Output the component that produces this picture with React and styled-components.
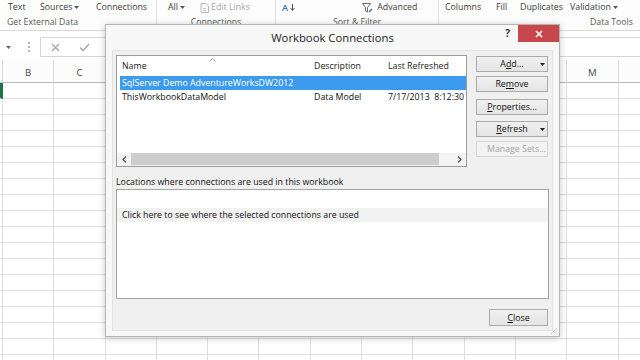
import React from 'react';
import styled, { createGlobalStyle } from 'styled-components';

const Global = createGlobalStyle`
  html, body { margin: 0; padding: 0; background: #fff; }
  body { width: 640px; height: 360px; overflow: hidden; font-family: "Open Sans", "Noto Sans", sans-serif; }
  #root { width: 640px; height: 360px; }
`;

const Screen = styled.div`
  position: relative;
  width: 640px;
  height: 360px;
  overflow: hidden;
  background: #fff;
  color: #222;
`;

/* ---------- Ribbon ---------- */
const Ribbon = styled.div`
  display: flex;
  height: 30px;
  background: #fdfdfd;
  border-bottom: 1px solid #d8d8d8;
`;
const Group = styled.div`
  flex: none;
  width: ${p => p.$w}px;
  display: flex;
  flex-direction: column;
  box-sizing: border-box;
  border-right: ${p => (p.$last ? 'none' : '1px solid #e1e1e1')};
`;
const RibbonRow = styled.div`
  display: flex;
  align-items: center;
  height: 15px;
  padding-left: ${p => p.$pl || 0}px;
  white-space: nowrap;
`;
const Slot = styled.div`
  flex: none;
  width: ${p => (p.$w ? `${p.$w}px` : 'auto')};
  display: flex;
  align-items: center;
  gap: 2px;
  font-size: 8.8px;
  line-height: 15px;
  color: ${p => (p.$disabled ? '#a8a8a8' : '#3c3c3c')};
`;
const GroupLabel = styled.div`
  height: 15px;
  line-height: 15px;
  font-size: 8.7px;
  color: #595959;
  white-space: nowrap;
  text-align: ${p => (p.$left ? 'left' : 'center')};
  padding-left: ${p => p.$pl || 0}px;
`;
const SortA = styled.span`
  color: #2e6fb7;
  font-size: 9px;
  font-weight: 600;
`;

const Caret = ({ color = '#555' }) => (
  <svg width="5" height="3" viewBox="0 0 5 3"><path d="M0 0H5L2.5 3Z" fill={color} /></svg>
);

/* ---------- Formula bar ---------- */
const FormulaBar = styled.div`
  display: flex;
  align-items: flex-start;
  height: 29px;
  box-sizing: border-box;
  padding-top: 6px;
  background: #fff;
`;
const NameBoxArrow = styled.div`
  width: 28px;
  height: 20px;
  display: flex;
  align-items: center;
  padding-left: 6px;
  box-sizing: border-box;
`;
const Grip3 = styled.div`
  width: 12px;
  height: 20px;
  display: flex;
  align-items: center;
`;
const FormulaBox = styled.div`
  flex: 1;
  height: 20px;
  box-sizing: border-box;
  border: 1px solid #d6d6d6;
  border-right: none;
  display: flex;
  align-items: center;
  padding-left: 10px;
  gap: 19px;
`;

/* ---------- Sheet ---------- */
/* letters of columns hidden behind the dialog are left blank */
const COLS = [
  { id: 'B', show: true }, { id: 'C', show: true }, { id: 'D' }, { id: 'E' }, { id: 'F' },
  { id: 'G' }, { id: 'H' }, { id: 'I' }, { id: 'J' }, { id: 'K' }, { id: 'L' },
  { id: 'M', show: true }, { id: 'N', show: true },
];
const SheetRow = styled.div`
  display: grid;
  grid-template-columns: 3px repeat(13, 51.3px);
  height: ${p => p.$h}px;
`;
const HeadCell = styled.div`
  box-sizing: border-box;
  border-right: 1px solid #d9d9d9;
  border-bottom: 1px solid #b9b9b9;
  background: #fcfcfc;
  font-size: 9.6px;
  color: #444;
  display: flex;
  align-items: center;
  justify-content: center;
  padding-top: 2px;
  overflow: hidden;
`;
const Cell = styled.div`
  box-sizing: border-box;
  border-right: ${p => (p.$active ? '3px solid #217346' : '1px solid #dedede')};
  border-bottom: 1px solid #dedede;
`;

/* ---------- Dialog ---------- */
const Dialog = styled.div`
  position: absolute;
  left: 105px;
  top: 24px;
  width: 455px;
  height: 313px;
  box-sizing: border-box;
  background: #f7f7f7;
  border: 1px solid #b4b4b4;
  box-shadow: 0 1px 7px rgba(0, 0, 0, 0.22);
  display: flex;
  flex-direction: column;
`;
const TitleBar = styled.div`
  height: 25px;
  flex: none;
  display: grid;
  grid-template-columns: 1fr auto 1fr;
  align-items: start;
`;
const Title = styled.div`
  font-size: 11.3px;
  line-height: 25px;
  color: #1e1e1e;
`;
const TitleControls = styled.div`
  display: flex;
  justify-content: flex-end;
  align-items: flex-start;
`;
const Help = styled.div`
  font-size: 10px;
  font-weight: 700;
  color: #333;
  line-height: 17px;
  margin-right: 8px;
`;
const CloseX = styled.div`
  width: 41px;
  height: 17px;
  background: #c7474d;
  color: #fff;
  display: flex;
  align-items: center;
  justify-content: center;
`;
const Client = styled.div`
  flex: 1;
  margin: 0 6px 5px 6px;
  background: #f0f0f0;
  border: 1px solid #e2e2e2;
  padding: 4px 4px 4px 3px;
  display: flex;
  flex-direction: column;
  font-size: 8.8px;
  color: #111;
`;
const TopSection = styled.div`
  display: flex;
  gap: 9px;
  height: 112px;
  flex: none;
`;
const ListBox = styled.div`
  width: 351px;
  box-sizing: border-box;
  border: 1px solid #9c9c9c;
  background: #fff;
  display: flex;
  flex-direction: column;
  overflow: hidden;
`;
const ListHeader = styled.div`
  display: flex;
  height: 20px;
  flex: none;
  position: relative;
`;
const ColHead = styled.div`
  flex: none;
  width: ${p => (p.$w ? `${p.$w}px` : 'auto')};
  padding-left: 5px;
  box-sizing: border-box;
  line-height: 20px;
  white-space: nowrap;
  color: #1a1a1a;
  position: relative;
`;
const SortMark = styled.svg`
  position: absolute;
  left: 92px;
  top: 2px;
`;
const ListRow = styled.div`
  display: flex;
  height: 14px;
  flex: none;
  margin-left: 3px;
  background: ${p => (p.$selected ? '#3d9bef' : 'transparent')};
  color: ${p => (p.$selected ? '#fff' : '#111')};
  white-space: pre;
  line-height: 14px;
`;
const ListCell = styled.div`
  flex: none;
  width: ${p => (p.$w ? `${p.$w}px` : 'auto')};
  padding-left: ${p => p.$pl}px;
  box-sizing: border-box;
  overflow: hidden;
`;
const Filler = styled.div`
  flex: 1;
`;
const HScroll = styled.div`
  height: 13px;
  flex: none;
  display: flex;
  background: #f3f3f3;
`;
const ScrollBtn = styled.div`
  width: 14px;
  display: flex;
  align-items: center;
  justify-content: center;
`;
const Thumb = styled.div`
  width: 308px;
  margin: 0 0 1px 0;
  background: #cdcdcd;
`;
const Track = styled.div`
  flex: 1;
`;
const ButtonColumn = styled.div`
  width: 72px;
  display: flex;
  flex-direction: column;
`;
const DlgButton = styled.div`
  width: ${p => p.$w || 72}px;
  height: ${p => p.$h || 16}px;
  margin-top: ${p => p.$mt || 0}px;
  box-sizing: border-box;
  border: 1px solid ${p => (p.$disabled ? '#d6d6d6' : '#ababab')};
  background: ${p => (p.$disabled ? '#f3f3f3' : 'linear-gradient(#f1f1f1, #e4e4e4)')};
  color: ${p => (p.$disabled ? '#a3a3a3' : '#111')};
  display: grid;
  grid-template-columns: 10px 1fr 10px;
  align-items: center;
  font-size: 8.8px;
  line-height: 14px;
  white-space: nowrap;
`;
const BtnText = styled.span`
  text-align: center;
  u { text-underline-offset: 1px; }
`;
const BtnArrow = styled.span`
  display: flex;
  justify-content: center;
`;
const SectionLabel = styled.div`
  margin-top: 8px;
  height: 14px;
  line-height: 14px;
  white-space: nowrap;
  flex: none;
`;
const LocationsBox = styled.div`
  height: 110px;
  flex: none;
  margin-right: -1px;
  box-sizing: border-box;
  border: 1px solid #a4a4a4;
  background: #fff;
  padding-top: 18px;
`;
const LocationRow = styled.div`
  height: 14px;
  line-height: 14px;
  padding-left: 5px;
  background: #f2f2f2;
  white-space: nowrap;
  color: #111;
`;
const Footer = styled.div`
  margin-top: 10px;
  display: flex;
  justify-content: flex-end;
`;
const ResizeGrip = styled.svg`
  position: absolute;
  right: 2px;
  bottom: 2px;
`;

const Chevron = ({ dir }) => (
  <svg width="5" height="7" viewBox="0 0 5 7">
    <path d={dir === 'left' ? 'M4 0.5L1 3.5L4 6.5' : 'M1 0.5L4 3.5L1 6.5'} fill="none" stroke="#555" strokeWidth="1.3" />
  </svg>
);

export default function App() {
  return (
    <Screen>
      <Global />
      <Ribbon>
        <Group $w={157}>
          <RibbonRow $pl={8}>
            <Slot $w={32}>Text</Slot>
            <Slot $w={56}>Sources <Caret /></Slot>
            <Slot>Connections</Slot>
          </RibbonRow>
          <GroupLabel $left $pl={7}>Get External Data</GroupLabel>
        </Group>
        <Group $w={119}>
          <RibbonRow $pl={11}>
            <Slot $w={32}>All <Caret /></Slot>
            <Slot $disabled>
              <svg width="9" height="10" viewBox="0 0 9 10">
                <path d="M1 0.5H6L8.5 3V9.5H1Z" fill="#fafafa" stroke="#b9b9b9" />
                <path d="M3 5.5h3M3 7.5h3" stroke="#c4c4c4" />
              </svg>
              Edit Links
            </Slot>
          </RibbonRow>
          <GroupLabel>Connections</GroupLabel>
        </Group>
        <Group $w={163}>
          <RibbonRow $pl={6}>
            <Slot $w={80}>
              <SortA>A</SortA>
              <svg width="5" height="7" viewBox="0 0 5 7"><path d="M2.5 0V6M0.5 4L2.5 6.5L4.5 4" fill="none" stroke="#555" strokeWidth="1" /></svg>
            </Slot>
            <Slot>
              <svg width="11" height="10" viewBox="0 0 11 10">
                <path d="M0.5 0.5H8.5L5.5 4.5V9L3.5 8V4.5Z" fill="#fff" stroke="#6b6b6b" />
                <path d="M7 9L10 6" stroke="#2e6fb7" strokeWidth="1.4" />
              </svg>
              &nbsp;Advanced
            </Slot>
          </RibbonRow>
          <GroupLabel>Sort &amp; Filter</GroupLabel>
        </Group>
        <Group $w={201} $last>
          <RibbonRow $pl={6}>
            <Slot $w={51}>Columns</Slot>
            <Slot $w={24}>Fill</Slot>
            <Slot $w={50}>Duplicates</Slot>
            <Slot>Validation <Caret /></Slot>
          </RibbonRow>
          <GroupLabel $left $pl={151}>Data Tools</GroupLabel>
        </Group>
      </Ribbon>

      <FormulaBar>
        <NameBoxArrow><Caret color="#666" /></NameBoxArrow>
        <Grip3>
          <svg width="2" height="12" viewBox="0 0 2 12">
            <rect x="0" y="1" width="2" height="2" fill="#b5b5b5" />
            <rect x="0" y="5" width="2" height="2" fill="#b5b5b5" />
            <rect x="0" y="9" width="2" height="2" fill="#b5b5b5" />
          </svg>
        </Grip3>
        <FormulaBox>
          <svg width="9" height="9" viewBox="0 0 9 9"><path d="M1 1L8 8M8 1L1 8" stroke="#a3a3a3" strokeWidth="1.2" /></svg>
          <svg width="11" height="9" viewBox="0 0 11 9"><path d="M1 4.5L4 7.5L10 1" fill="none" stroke="#a3a3a3" strokeWidth="1.3" /></svg>
        </FormulaBox>
      </FormulaBar>

      <div>
        <SheetRow $h={23}>
          <HeadCell />
          {COLS.map(c => <HeadCell key={c.id}>{c.show ? c.id : ''}</HeadCell>)}
        </SheetRow>
        {Array.from({ length: 18 }).map((_, r) => (
          <SheetRow key={r} $h={16}>
            <Cell $active={r === 0} />
            {COLS.map(c => <Cell key={c.id} />)}
          </SheetRow>
        ))}
      </div>

      <Dialog>
        <TitleBar>
          <span />
          <Title>Workbook Connections</Title>
          <TitleControls>
            <Help>?</Help>
            <CloseX>
              <svg width="8" height="8" viewBox="0 0 8 8"><path d="M1 1L7 7M7 1L1 7" stroke="#fff" strokeWidth="1.6" /></svg>
            </CloseX>
          </TitleControls>
        </TitleBar>
        <Client>
          <TopSection>
            <ListBox>
              <ListHeader>
                <ColHead $w={192}>
                  Name
                  <SortMark width="7" height="4" viewBox="0 0 7 4"><path d="M0.5 3.5L3.5 0.5L6.5 3.5" fill="none" stroke="#9a9a9a" /></SortMark>
                </ColHead>
                <ColHead $w={74}>Description</ColHead>
                <ColHead>Last Refreshed</ColHead>
              </ListHeader>
              <ListRow $selected>
                <ListCell $w={189} $pl={2}>SqlServer Demo AdventureWorksDW2012</ListCell>
                <ListCell $w={74} $pl={5} />
                <ListCell $pl={5} />
              </ListRow>
              <ListRow>
                <ListCell $w={189} $pl={2}>ThisWorkbookDataModel</ListCell>
                <ListCell $w={74} $pl={5}>Data Model</ListCell>
                <ListCell $pl={5}>7/17/2013  8:12:30 PM</ListCell>
              </ListRow>
              <Filler />
              <HScroll>
                <ScrollBtn><Chevron dir="left" /></ScrollBtn>
                <Thumb />
                <Track />
                <ScrollBtn><Chevron dir="right" /></ScrollBtn>
              </HScroll>
            </ListBox>
            <ButtonColumn>
              <DlgButton $mt={1}><span /><BtnText>A<u>d</u>d...</BtnText><BtnArrow><Caret color="#222" /></BtnArrow></DlgButton>
              <DlgButton $mt={4}><span /><BtnText>Re<u>m</u>ove</BtnText><span /></DlgButton>
              <DlgButton $mt={7}><span /><BtnText><u>P</u>roperties...</BtnText><span /></DlgButton>
              <DlgButton $mt={6}><span /><BtnText><u>R</u>efresh</BtnText><BtnArrow><Caret color="#222" /></BtnArrow></DlgButton>
              <DlgButton $mt={4} $disabled><span /><BtnText>Manage Sets...</BtnText><span /></DlgButton>
            </ButtonColumn>
          </TopSection>
          <SectionLabel>Locations where connections are used in this workbook</SectionLabel>
          <LocationsBox>
            <LocationRow>Click here to see where the selected connections are used</LocationRow>
          </LocationsBox>
          <Footer>
            <DlgButton $w={59} $h={17}><span /><BtnText><u>C</u>lose</BtnText><span /></DlgButton>
          </Footer>
        </Client>
        <ResizeGrip width="7" height="7" viewBox="0 0 7 7">
          <path d="M6.5 1.5L1.5 6.5M6.5 4L4 6.5" stroke="#8a8a8a" strokeWidth="0.9" strokeDasharray="1 1" />
        </ResizeGrip>
      </Dialog>
    </Screen>
  );
}
